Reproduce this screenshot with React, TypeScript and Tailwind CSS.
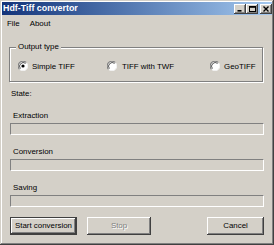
import React from "react";

const raised =
  "shadow-[inset_-1px_-1px_0_#404040,inset_1px_1px_0_#ffffff,inset_-2px_-2px_0_#808080]";

function TitleBtn({ children }: { children: React.ReactNode }) {
  return (
    <div className={`w-[12px] h-[10px] bg-[#d4d0c8] flex items-center justify-center ${raised}`}>
      {children}
    </div>
  );
}

function Radio({ checked }: { checked?: boolean }) {
  return (
    <svg width="10" height="10" viewBox="0 0 10 10" className="shrink-0">
      <circle cx="5" cy="5" r="4.6" fill="#ffffff" />
      <path d="M1.6 8.4 A4.6 4.6 0 0 1 8.4 1.6" stroke="#808080" strokeWidth="1.1" fill="none" />
      <path d="M2.4 7.6 A3.7 3.7 0 0 1 7.6 2.4" stroke="#404040" strokeWidth="0.9" fill="none" />
      <path d="M8.4 1.6 A4.6 4.6 0 0 1 1.6 8.4" stroke="#f4f4f4" strokeWidth="1" fill="none" />
      {checked && <circle cx="5" cy="5" r="1.6" fill="#000000" />}
    </svg>
  );
}

function Bar() {
  return (
    <div className="h-[12px] w-full border-t border-l border-[#808080] border-b border-r border-b-white border-r-white bg-[#d4d0c8]" />
  );
}

function Label({ children }: { children: React.ReactNode }) {
  return <div className="h-[10px] leading-[10px] pl-[3px]">{children}</div>;
}

export default function App() {
  return (
    <div
      className="w-[274px] h-[245px] bg-[#d4d0c8] flex flex-col p-[2px] text-black text-[7.9px] font-['Liberation_Sans',Arial,sans-serif] shadow-[inset_-1px_-1px_0_#404040,inset_1px_1px_0_#d4d0c8,inset_-2px_-2px_0_#808080,inset_2px_2px_0_#ffffff]"
    >
      {/* Title bar */}
      <div className="h-[13px] flex items-center bg-linear-to-r from-[#14347a] to-[#a6caf0] pl-[1px]">
        <span className="flex-1 text-white font-bold text-[8.9px] leading-none">Hdf-Tiff convertor</span>
        <div className="flex items-center">
          <TitleBtn>
            <svg width="6" height="6" viewBox="0 0 6 6">
              <rect x="0.5" y="4" width="4" height="1.6" fill="#000" />
            </svg>
          </TitleBtn>
          <TitleBtn>
            <svg width="7" height="6" viewBox="0 0 7 6">
              <rect x="0.5" y="0.5" width="6" height="5" fill="none" stroke="#000" strokeWidth="1" />
              <rect x="0.5" y="0.5" width="6" height="1.3" fill="#000" />
            </svg>
          </TitleBtn>
          <div className="w-[2px]" />
          <TitleBtn>
            <svg width="6" height="6" viewBox="0 0 6 6">
              <path d="M0.5 0.5 L5.5 5.5 M5.5 0.5 L0.5 5.5" stroke="#000" strokeWidth="1.4" />
            </svg>
          </TitleBtn>
        </div>
      </div>

      {/* Menu */}
      <div className="h-[18px] flex items-center gap-[10px] pl-[5px]">
        <span>File</span>
        <span>About</span>
      </div>

      {/* Content */}
      <div className="flex flex-col px-[8px]">
        {/* Group box */}
        <div className="relative mt-[14px] ml-[-1px] mr-[1px] h-[35px] border border-[#808080] shadow-[1px_1px_0_#ffffff,inset_1px_1px_0_#ffffff] pt-[4px] flex items-center pl-[8px]">
          <span className="absolute left-[6px] top-[-6px] bg-[#d4d0c8] px-[2px] leading-[10px]">Output type</span>
          <div className="w-[89px] flex items-center gap-[4px]">
            <Radio checked />
            <span>Simple TIFF</span>
          </div>
          <div className="w-[103px] flex items-center gap-[5px]">
            <Radio />
            <span>TIFF with TWF</span>
          </div>
          <div className="flex items-center gap-[4px]">
            <Radio />
            <span>GeoTIFF</span>
          </div>
        </div>

        <div className="mt-[7px] h-[10px] leading-[10px] pl-[1px]">State:</div>

        <div className="mt-[12px] flex flex-col gap-[2px]">
          <Label>Extraction</Label>
          <Bar />
        </div>
        <div className="mt-[12px] flex flex-col gap-[2px]">
          <Label>Conversion</Label>
          <Bar />
        </div>
        <div className="mt-[12px] flex flex-col gap-[2px]">
          <Label>Saving</Label>
          <Bar />
        </div>

        {/* Buttons */}
        <div className="mt-[10px] flex items-center justify-between">
          <div className="flex items-center gap-[10px]">
            <div className="w-[67px] h-[18px] border border-[#404040] flex">
              <div className={`flex-1 flex items-center justify-center ${raised}`}>Start conversion</div>
            </div>
            <div className={`w-[64px] h-[18px] flex items-center justify-center text-[#808080] [text-shadow:1px_1px_0_#ffffff] ${raised}`}>
              Stop
            </div>
          </div>
          <div className={`w-[57px] h-[18px] flex items-center justify-center ${raised}`}>Cancel</div>
        </div>
      </div>
    </div>
  );
}
